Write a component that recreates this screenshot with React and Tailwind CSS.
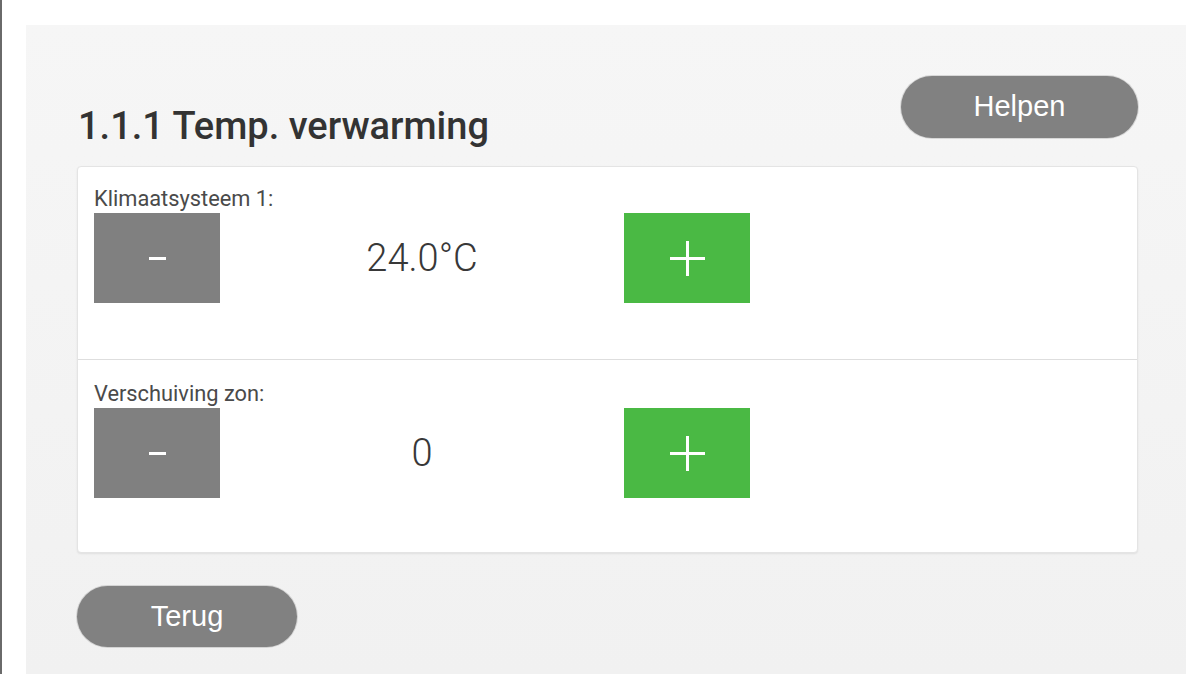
const rows = [
  { label: 'Klimaatsysteem 1:', value: '24.0°C', pad: 'pt-[20px] pb-[56px]' },
  { label: 'Verschuiving zon:', value: '0', pad: 'pt-[22px] pb-[54px]' },
];

function Stepper({ label, value, pad, last }) {
  return (
    <div className={`pl-4 ${pad} ${last ? '' : 'border-b border-[#dedede]'}`}>
      <p className="h-[24px] text-[21.8px] leading-[24px] text-[#4a4a4a]">{label}</p>
      <div className="mt-[2px] flex items-center">
        <button className="w-[126px] h-[90px] bg-[#808080] flex items-center justify-center">
          <span className="block w-[17px] h-[3px] bg-white" />
        </button>
        <div className="w-[404px] text-center text-[38px] font-light text-[#383838]">{value}</div>
        <button className="relative w-[126px] h-[90px] bg-[#4ab944] flex items-center justify-center">
          <span className="absolute w-[35px] h-[3px] bg-white" />
          <span className="absolute w-[3px] h-[35px] bg-white" />
        </button>
      </div>
    </div>
  );
}

export default function App() {
  return (
    <div className="flex h-[674px] bg-white overflow-hidden" style={{ fontFamily: 'Roboto, "Liberation Sans", sans-serif' }}>
      <div className="w-[2px] shrink-0 bg-[#6a6a6a]" />
      <div className="flex-1 pl-[24px] pt-[25px]">
        <div className="h-full bg-linear-to-b from-[#f6f6f6] to-[#f1f1f1] pl-[51px] pr-[48px] pt-[51px]">
          {/* header */}
          <div className="flex items-start justify-between">
            <h1 className="ml-[1px] mt-[31px] text-[38px] leading-none font-medium text-[#333]">1.1.1 Temp. verwarming</h1>
            <button
              className="w-[237px] h-[62px] rounded-full bg-[#818181] text-white text-[29px] shadow-[0_0_0_1px_rgba(0,0,0,0.12)]"
              style={{ fontFamily: '"Liberation Sans", Arial, sans-serif' }}
            >
              Helpen
            </button>
          </div>

          {/* card */}
          <div className="mt-[21px] bg-white rounded-[4px] border border-[#e4e4e4] shadow-[0_1px_2px_rgba(0,0,0,0.08)]">
            {rows.map((r, i) => (
              <Stepper key={r.label} {...r} last={i === rows.length - 1} />
            ))}
          </div>

          <button
            className="mt-[33px] w-[220px] h-[61px] rounded-full bg-[#818181] text-white text-[29px] shadow-[0_0_0_1px_rgba(0,0,0,0.12)]"
            style={{ fontFamily: '"Liberation Sans", Arial, sans-serif' }}
          >
            Terug
          </button>
        </div>
      </div>
    </div>
  );
}
